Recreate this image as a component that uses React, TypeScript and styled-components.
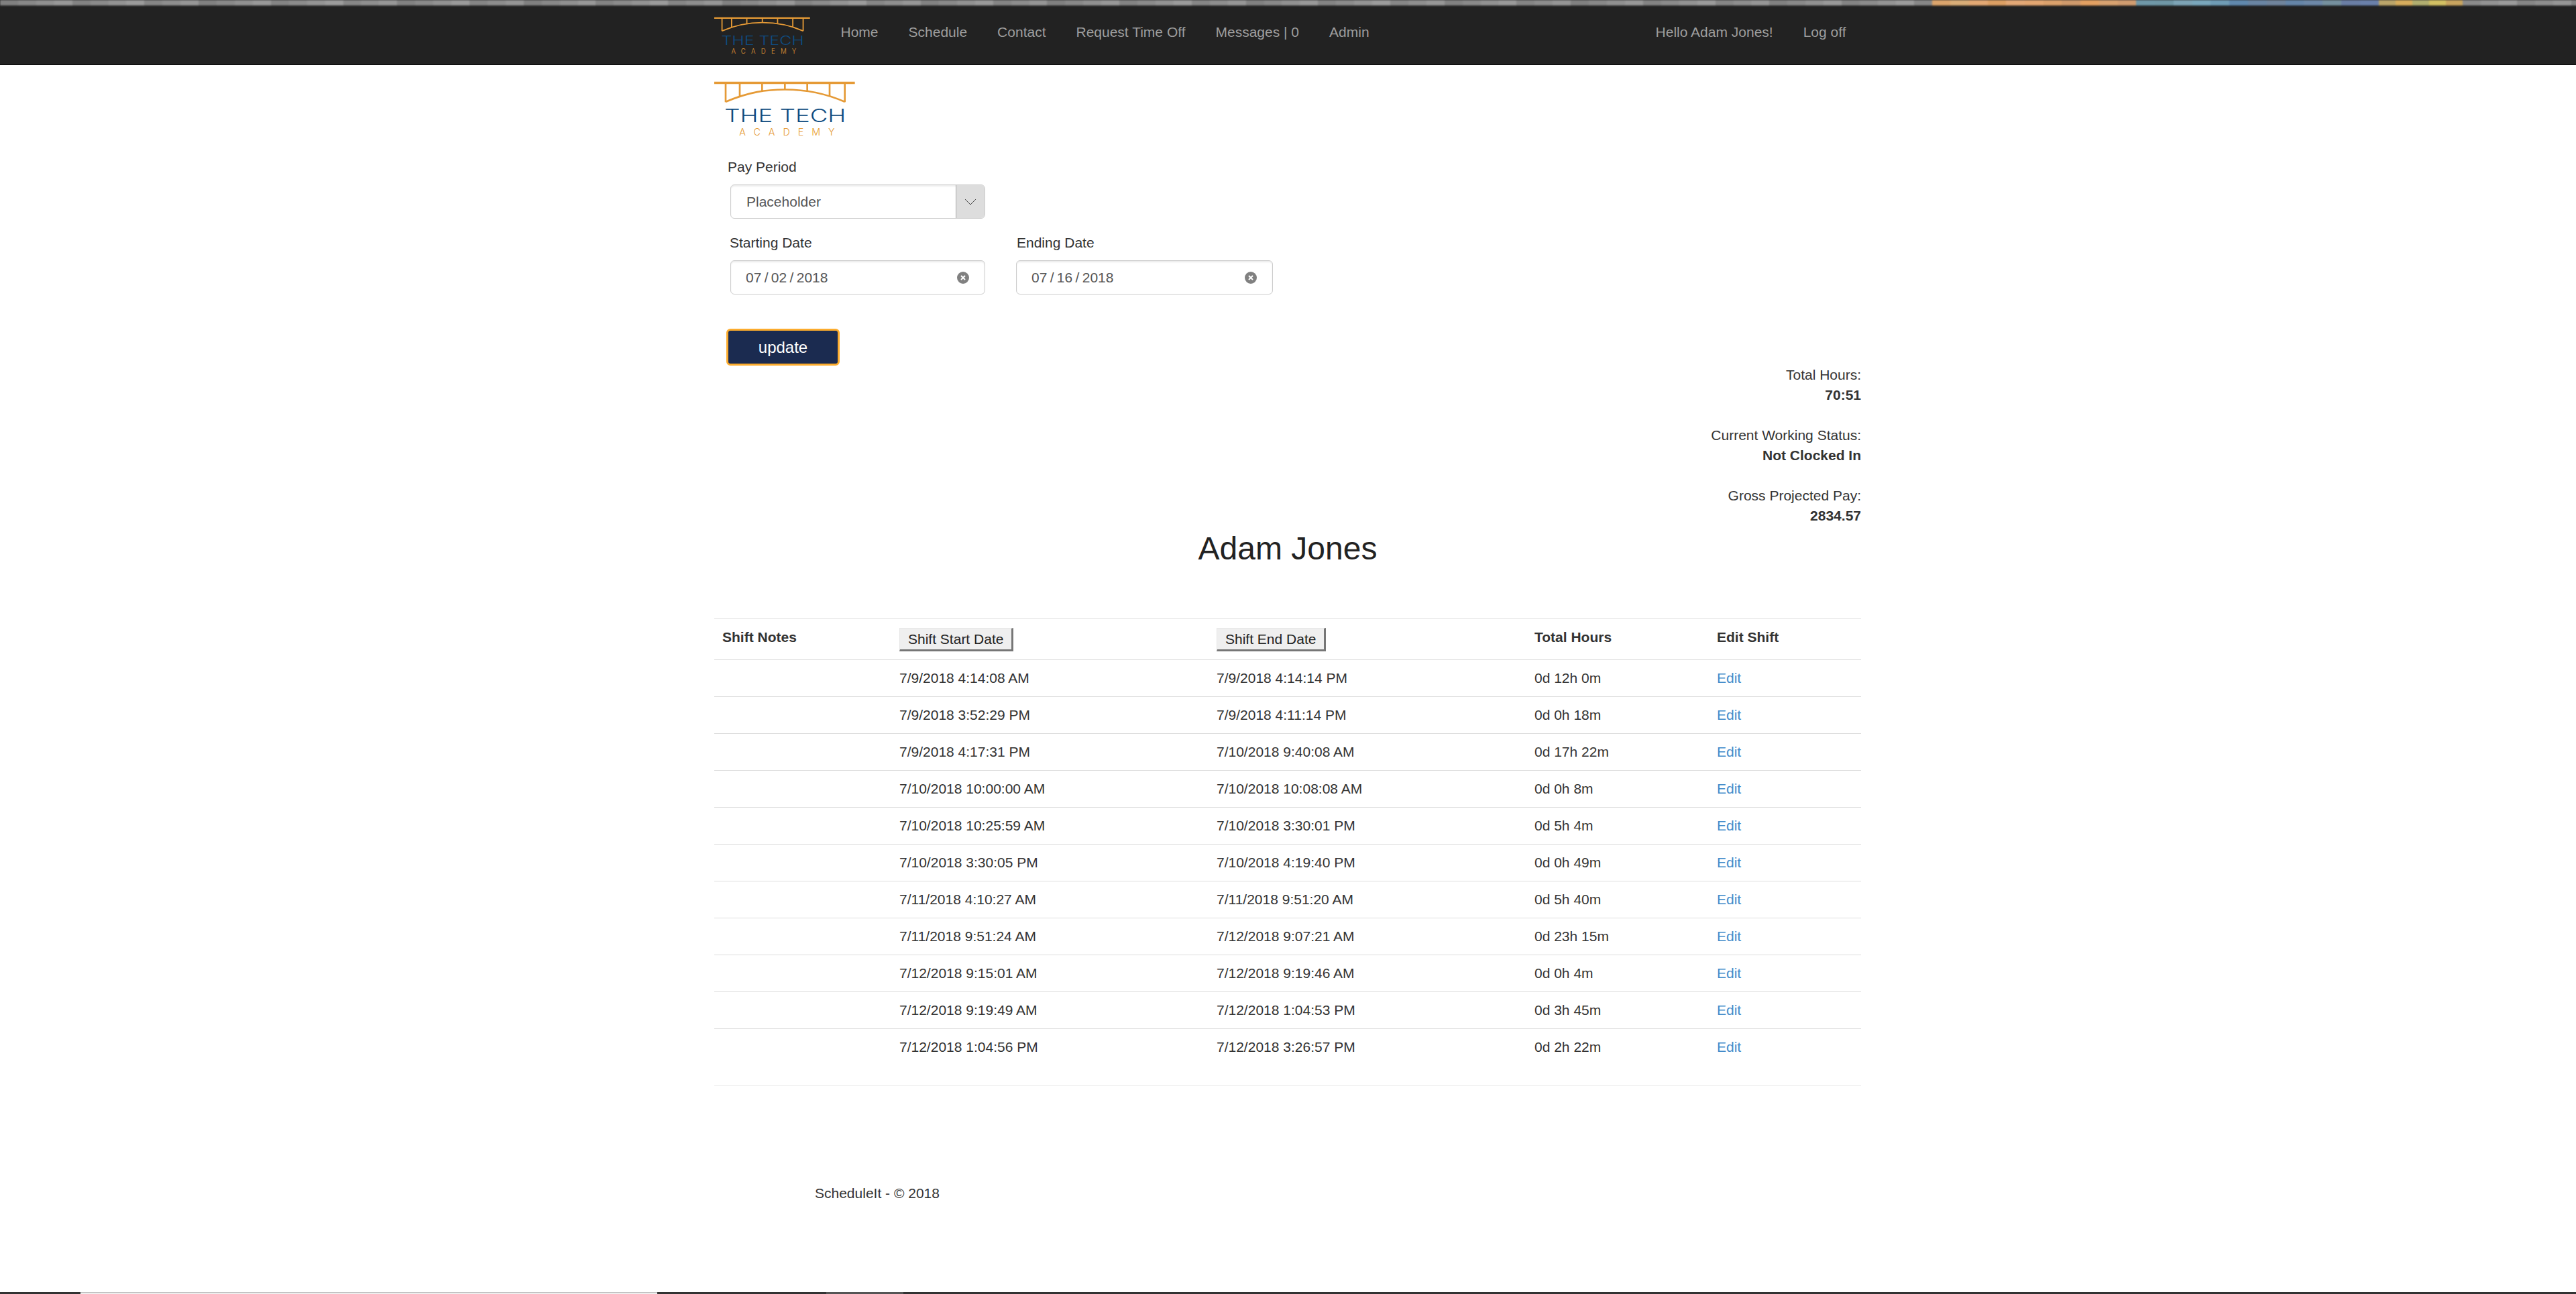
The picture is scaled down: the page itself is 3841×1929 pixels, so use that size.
import styled, { createGlobalStyle } from 'styled-components';

const GlobalStyle = createGlobalStyle`
  html, body {
    margin: 0;
    background: #fff;
  }
  * {
    box-sizing: border-box;
  }
  body {
    font-family: "Liberation Sans", Arial, sans-serif;
    font-size: 21px;
    line-height: 30px;
    color: #333;
  }
`;

const Page = styled.div`
  min-height: 1929px;
  display: flex;
  flex-direction: column;
  overflow: hidden;
`;

/* blurred wallpaper sliver showing above the navbar */
const Strip = styled.div`
  flex: none;
  height: 10px;
  overflow: hidden;
  background: #222;
`;
const TileRow = styled.div`
  display: flex;
  height: 10px;
  filter: blur(1.2px);
`;
const Tile = styled.div<{ $color: string; $width: number }>`
  position: relative;
  flex: 0 0 ${({ $width }) => $width}px;
  background: ${({ $color }) => $color};
  &::after {
    content: '';
    position: absolute;
    left: 0;
    right: 0;
    bottom: 0;
    height: 2px;
    background: rgba(20, 20, 20, 0.78);
  }
`;

const Navbar = styled.nav`
  flex: none;
  height: 87px;
  background: #222;
  border-bottom: 1px solid #080808;
`;
const NavInner = styled.div`
  width: 1710px;
  margin-left: 1065px;
  display: flex;
  align-items: flex-start;
`;
const Brand = styled.div`
  flex: 0 0 166px;
  padding-top: 15px;
  svg {
    display: block;
    width: 143px;
    height: 58px;
  }
`;
const NavList = styled.div<{ $right?: boolean }>`
  display: flex;
  margin-left: ${({ $right }) => ($right ? 'auto' : '0')};
`;
const NavLink = styled.a`
  padding: 23px 22.5px;
  color: #9d9d9d;
  white-space: nowrap;
`;

const Main = styled.main`
  width: 1710px;
  margin-left: 1065px;
`;
const PageLogo = styled.div`
  padding-top: 24px;
  svg {
    display: block;
    width: 210px;
    height: 85px;
  }
`;

const FormArea = styled.form`
  padding: 28px 0 0 24px;
`;
const Field = styled.div<{ $width: number }>`
  width: ${({ $width }) => $width}px;
`;
const Label = styled.label<{ $shift: number }>`
  display: block;
  margin: 0 0 11px ${({ $shift }) => $shift}px;
`;
const SelectBox = styled.div`
  display: flex;
  height: 51px;
  border: 1px solid #ccc;
  border-radius: 6px;
  box-shadow: inset 0 2px 2px rgba(0, 0, 0, 0.075);
  color: #555;
  overflow: hidden;
`;
const SelectValue = styled.div`
  flex: 1;
  padding: 10px 23px;
`;
const SelectArrow = styled.div`
  flex: 0 0 43px;
  display: flex;
  align-items: center;
  justify-content: center;
  background: #ddd;
  border-left: 1px solid #aaa;
`;
const DateRow = styled.div`
  display: flex;
  gap: 46px;
  margin-top: 21px;
`;
const DateBox = styled.div`
  display: flex;
  align-items: center;
  justify-content: space-between;
  height: 51px;
  padding: 0 23px 0 22px;
  border: 1px solid #ccc;
  border-radius: 6px;
  box-shadow: inset 0 2px 2px rgba(0, 0, 0, 0.075);
  color: #555;
  word-spacing: -1.5px;
`;
const UpdateButton = styled.button`
  display: block;
  width: 169px;
  height: 55px;
  margin: 51px 0 0 -6px;
  background: #1b2b50;
  border: 3px solid #fcac2e;
  border-radius: 6px;
  color: #fff;
  font: 24px "Liberation Sans", Arial, sans-serif;
`;

const Stats = styled.div`
  margin-top: -1px;
  text-align: right;
`;
const StatGroup = styled.div`
  & + & {
    margin-top: 30px;
  }
`;
const StatValue = styled.div`
  font-weight: 700;
`;
const Title = styled.h2`
  margin: 7px 0 78px;
  font-size: 48px;
  font-weight: 400;
  line-height: 53px;
  text-align: center;
  color: #222;
`;

const Row = styled.div<{ $header?: boolean }>`
  display: grid;
  grid-template-columns: 264px 473px 474px 272px 227px;
  height: ${({ $header }) => ($header ? 61 : 55)}px;
  border-top: 1px solid #ddd;
`;
const Cell = styled.div`
  padding: 12px;
`;
const HeadCell = styled(Cell)`
  font-weight: 700;
`;
const SortButton = styled.button`
  display: block;
  height: 35px;
  margin: 1px 0 0;
  padding: 0 12px;
  background: #efefef;
  border-style: solid;
  border-width: 1px 3px 3px 1px;
  border-color: #e6e6e6 #767676 #767676 #e6e6e6;
  color: #222;
  font: 21px "Liberation Sans", Arial, sans-serif;
  white-space: nowrap;
`;
const EditLink = styled.a`
  color: #428bca;
`;
const Rule = styled.hr`
  margin: 30px 0 0;
  border: 0;
  border-top: 1px solid #eee;
`;
const Footer = styled.footer`
  margin-top: 145px;
  padding-left: 150px;
`;

const TaskbarEdge = styled.div`
  margin-top: auto;
  flex: none;
  height: 3px;
  display: flex;
`;
const EdgePart = styled.div<{ $width?: number; $tone: string }>`
  flex: ${({ $width }) => ($width ? `0 0 ${$width}px` : '1')};
  background: ${({ $tone }) => $tone};
`;

const ORANGE = ['#dba46c', '#d9ad78', '#e3a873', '#dc9f63', '#e3a876', '#e3a671', '#dba16c', '#cf9a6c', '#e2a062', '#d8a270', '#d09c70'];
const BLUE = ['#6f98a8', '#6f97a6', '#7da4b6', '#7aa7bc', '#6f9cb5', '#6088ad', '#6a85a3', '#70849c', '#6585a8', '#6d88a8', '#75909e', '#6a7ea5', '#6a80aa'];
const YELLOW = ['#bba56a', '#d7ad5d', '#b1ae70', '#d2c063', '#c8a45f'];

const gray = (i: number) => {
  const v = 128 + ((i * 37) % 29);
  return `rgb(${v},${v},${v})`;
};

const tiles = [
  ...Array.from({ length: 107 }, (_, i) => ({ color: gray(i), width: 26.93 })),
  ...ORANGE.map((color) => ({ color, width: 27.7 })),
  ...BLUE.map((color) => ({ color, width: 27.8 })),
  ...YELLOW.map((color) => ({ color, width: 25 })),
  ...Array.from({ length: 8 }, (_, i) => ({ color: gray(i + 5), width: 27 })),
];

const shifts = [
  ['7/9/2018 4:14:08 AM', '7/9/2018 4:14:14 PM', '0d 12h 0m'],
  ['7/9/2018 3:52:29 PM', '7/9/2018 4:11:14 PM', '0d 0h 18m'],
  ['7/9/2018 4:17:31 PM', '7/10/2018 9:40:08 AM', '0d 17h 22m'],
  ['7/10/2018 10:00:00 AM', '7/10/2018 10:08:08 AM', '0d 0h 8m'],
  ['7/10/2018 10:25:59 AM', '7/10/2018 3:30:01 PM', '0d 5h 4m'],
  ['7/10/2018 3:30:05 PM', '7/10/2018 4:19:40 PM', '0d 0h 49m'],
  ['7/11/2018 4:10:27 AM', '7/11/2018 9:51:20 AM', '0d 5h 40m'],
  ['7/11/2018 9:51:24 AM', '7/12/2018 9:07:21 AM', '0d 23h 15m'],
  ['7/12/2018 9:15:01 AM', '7/12/2018 9:19:46 AM', '0d 0h 4m'],
  ['7/12/2018 9:19:49 AM', '7/12/2018 1:04:53 PM', '0d 3h 45m'],
  ['7/12/2018 1:04:56 PM', '7/12/2018 3:26:57 PM', '0d 2h 22m'],
];

const stats = [
  ['Total Hours:', '70:51'],
  ['Current Working Status:', 'Not Clocked In'],
  ['Gross Projected Pay:', '2834.57'],
];

const BridgeLogo = () => (
  <svg viewBox="46 60 630 254">
    <g fill="none" stroke="#e59a36" strokeWidth="8">
      <path d="M46 67H675" strokeWidth="10" />
      <path d="M97 70V153M160 70V128M260 70V104M362 70V97M462 70V102M562 70V127M630 70V153" />
      <path d="M97 152C200 108 280 97 362 97S530 108 630 152" />
    </g>
    <text x="92" y="243" fontFamily="Inter, Liberation Sans, sans-serif" fontWeight="300" fontSize="80" fill="#0f4c81" textLength="543" lengthAdjust="spacingAndGlyphs">
      THE TECH
    </text>
    <text x="158" y="303" fontFamily="Inter, Liberation Sans, sans-serif" fontWeight="300" fontSize="43" fill="#e59a36" textLength="427" lengthAdjust="spacing">
      ACADEMY
    </text>
  </svg>
);

const ClearIcon = () => (
  <svg width="18" height="18" viewBox="0 0 18 18">
    <circle cx="9" cy="9" r="9" fill="#808080" />
    <path d="M6 6L12 12M12 6L6 12" stroke="#fff" strokeWidth="2" />
  </svg>
);

export default function App() {
  return (
    <Page>
      <GlobalStyle />
      <Strip>
        <TileRow>
          {tiles.map((tile, i) => (
            <Tile key={i} $color={tile.color} $width={tile.width} />
          ))}
        </TileRow>
      </Strip>
      <Navbar>
        <NavInner>
          <Brand>
            <BridgeLogo />
          </Brand>
          <NavList>
            <NavLink>Home</NavLink>
            <NavLink>Schedule</NavLink>
            <NavLink>Contact</NavLink>
            <NavLink>Request Time Off</NavLink>
            <NavLink>Messages | 0</NavLink>
            <NavLink>Admin</NavLink>
          </NavList>
          <NavList $right>
            <NavLink>Hello Adam Jones!</NavLink>
            <NavLink>Log off</NavLink>
          </NavList>
        </NavInner>
      </Navbar>
      <Main>
        <PageLogo>
          <BridgeLogo />
        </PageLogo>
        <FormArea>
          <Field $width={380}>
            <Label $shift={-4}>Pay Period</Label>
            <SelectBox>
              <SelectValue>Placeholder</SelectValue>
              <SelectArrow>
                <svg width="18" height="10" viewBox="0 0 18 10">
                  <path d="M1 1L9 9L17 1" fill="none" stroke="#444" />
                </svg>
              </SelectArrow>
            </SelectBox>
          </Field>
          <DateRow>
            <Field $width={380}>
              <Label $shift={-1}>Starting Date</Label>
              <DateBox>
                07 / 02 / 2018
                <ClearIcon />
              </DateBox>
            </Field>
            <Field $width={383}>
              <Label $shift={1}>Ending Date</Label>
              <DateBox>
                07 / 16 / 2018
                <ClearIcon />
              </DateBox>
            </Field>
          </DateRow>
          <UpdateButton type="button">update</UpdateButton>
        </FormArea>
        <Stats>
          {stats.map(([label, value]) => (
            <StatGroup key={label}>
              <div>{label}</div>
              <StatValue>{value}</StatValue>
            </StatGroup>
          ))}
        </Stats>
        <Title>Adam Jones</Title>
        <Row $header>
          <HeadCell>Shift Notes</HeadCell>
          <HeadCell>
            <SortButton type="button">Shift Start Date</SortButton>
          </HeadCell>
          <HeadCell>
            <SortButton type="button">Shift End Date</SortButton>
          </HeadCell>
          <HeadCell>Total Hours</HeadCell>
          <HeadCell>Edit Shift</HeadCell>
        </Row>
        {shifts.map(([start, end, total]) => (
          <Row key={start}>
            <Cell />
            <Cell>{start}</Cell>
            <Cell>{end}</Cell>
            <Cell>{total}</Cell>
            <Cell>
              <EditLink>Edit</EditLink>
            </Cell>
          </Row>
        ))}
        <Rule />
        <Footer>ScheduleIt - © 2018</Footer>
      </Main>
      <TaskbarEdge>
        <EdgePart $width={120} $tone="#333" />
        <EdgePart $width={860} $tone="linear-gradient(#b5b5b5 0 1px, #eee 1px)" />
        <EdgePart $width={252} $tone="#333" />
        <EdgePart $width={115} $tone="#555" />
        <EdgePart $tone="#333" />
      </TaskbarEdge>
    </Page>
  );
}
